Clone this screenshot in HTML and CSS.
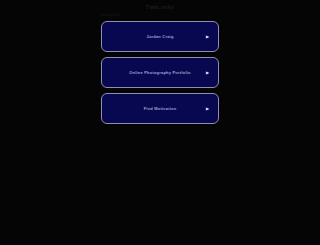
FILE: index.html
```html
<!DOCTYPE html>
<html lang="en">
<head>
    <meta charset="UTF-8">
    <meta name="viewport" content="width=device-width, initial-scale=1.0">
    <title>7wb.info</title>
    <link rel="stylesheet" href="styles.css">
</head>
<body>
    <div class="header">7wb.info</div>

    <div class="links">
        <div class="links-title">Related Links</div>
        <a class="link-box" href="#">
            <span class="link-text">Jordan Craig</span>
            <span class="arrow">&#9654;</span>
        </a>
        <a class="link-box" href="#">
            <span class="link-text">Online Photography Portfolio</span>
            <span class="arrow">&#9654;</span>
        </a>
        <a class="link-box" href="#">
            <span class="link-text">Find Motivation</span>
            <span class="arrow">&#9654;</span>
        </a>
    </div>
</body>
</html>
```

FILE: styles.css
```css
body {
    font-family: Arial, "Liberation Sans", sans-serif;
    margin: 0;
    padding: 0;
    background: #050505;
}
.header {
    text-align: center;
    color: #1e1e1e;
    font-size: 6px;
    font-weight: bold;
    letter-spacing: 0.5px;
    padding-top: 4px;
    height: 9px;
}
.links {
    width: 118px;
    margin: 0 auto;
    display: flex;
    flex-direction: column;
    gap: 5px;
}
.links-title {
    color: #1c1c1c;
    font-size: 3px;
    height: 4px;
    line-height: 4px;
    margin-bottom: -1px;
}
.link-box {
    display: flex;
    align-items: center;
    height: 29px;
    border: 1.5px solid #8e8eb0;
    border-radius: 6px;
    background: #080850;
    text-decoration: none;
    position: relative;
}
.link-text {
    flex: 1;
    text-align: center;
    color: #a0a0d8;
    font-size: 4px;
    font-weight: bold;
    letter-spacing: 0.2px;
}
.arrow {
    position: absolute;
    right: 9px;
    color: #e8e8ff;
    font-size: 4px;
}
```
